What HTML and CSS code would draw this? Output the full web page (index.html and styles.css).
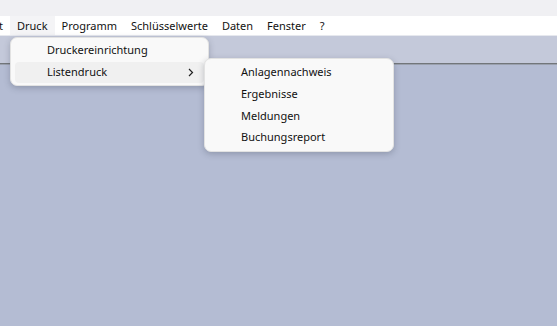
FILE: index.html
```html
<!DOCTYPE html>
<html lang="de">
<head>
<meta charset="utf-8">
<link rel="stylesheet" href="styles.css">
</head>
<body>
<div class="app">
  <div class="titlebar"></div>
  <nav class="menubar">
    <span class="mi first">t</span>
    <span class="mi active">Druck</span>
    <span class="mi">Programm</span>
    <span class="mi">Schlüsselwerte</span>
    <span class="mi">Daten</span>
    <span class="mi">Fenster</span>
    <span class="mi">?</span>
  </nav>
  <div class="workspace">
    <div class="toolbar-area"></div>
    <div class="rule"></div>
    <div class="client"></div>
  </div>

  <div class="menu menu-druck">
    <div class="item">Druckereinrichtung</div>
    <div class="item hover">Listendruck
      <svg class="chev" width="6" height="9" viewBox="0 0 6 9"><path d="M1 1 L4.5 4.5 L1 8" fill="none" stroke="#222" stroke-width="1.2"/></svg>
    </div>
  </div>

  <div class="menu menu-liste">
    <div class="item">Anlagennachweis</div>
    <div class="item">Ergebnisse</div>
    <div class="item">Meldungen</div>
    <div class="item">Buchungsreport</div>
  </div>
</div>
</body>
</html>
```

FILE: styles.css
```css
* { box-sizing: border-box; }
html, body { margin: 0; padding: 0; }
body {
  width: 557px;
  height: 326px;
  overflow: hidden;
  font-family: "Noto Sans", "Open Sans", sans-serif;
  font-size: 11px;
  color: #111;
}
.app {
  position: relative;
  width: 557px;
  height: 326px;
  display: flex;
  flex-direction: column;
}
.titlebar {
  height: 16px;
  background: #f0f0f3;
}
.menubar {
  background: #ffffff;
  display: flex;
  align-items: stretch;
  border-bottom: 1px solid #e6e8ee;
  height: 20px;
}
.mi {
  padding: 0 7px;
  line-height: 20px;
  white-space: nowrap;
}
.mi.first {
  padding-left: 0;
  margin-left: -1px;
  padding-right: 7px;
}
.mi.active {
  background: #f4f4f6;
}
.workspace {
  flex: 1;
  display: flex;
  flex-direction: column;
}
.toolbar-area {
  height: 27px;
  background: #c4c9da;
}
.rule {
  height: 2px;
  background: #72767a;
  border-bottom: 1px solid #9aa0ad;
}
.client {
  flex: 1;
  background: #b4bcd3;
}

.menu {
  position: absolute;
  background: #f9f9f9;
  border: 1px solid #e2e2e2;
  border-radius: 7px;
  box-shadow: 0 2px 6px rgba(40, 45, 60, 0.26);
  padding: 2px 4px;
  display: flex;
  flex-direction: column;
}
.menu-druck {
  left: 10px;
  top: 37px;
  width: 199px;
  height: 49px;
}
.menu-liste {
  left: 204px;
  top: 58px;
  width: 190px;
  height: 94px;
  padding-top: 3px;
}
.item {
  position: relative;
  height: 22px;
  line-height: 20px;
  padding-left: 32px;
  border-radius: 4px;
  white-space: nowrap;
}
.item.hover {
  background: #f0f0f0;
  height: 21px;
}
.chev {
  position: absolute;
  right: 10px;
  top: 6px;
}
```
